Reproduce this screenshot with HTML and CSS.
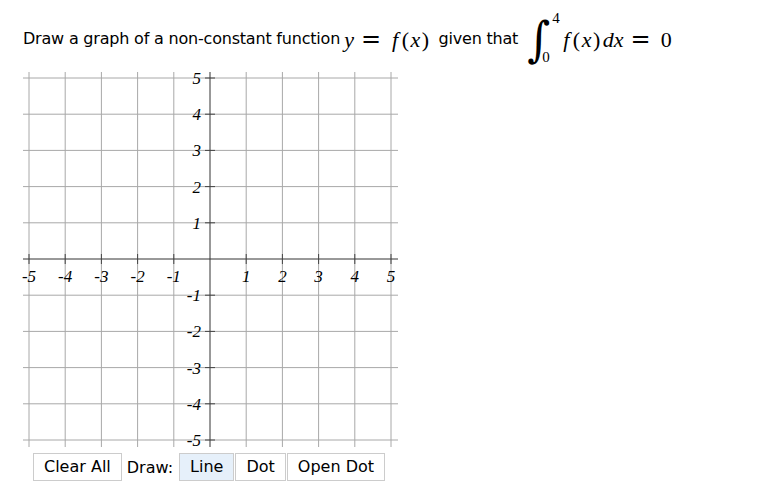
FILE: index.html
```html
<!DOCTYPE html>
<html>
<head>
<meta charset="utf-8">
<link rel="stylesheet" href="styles.css">
</head>
<body>
<div class="page">
  <div class="prompt">
    <span class="txt">Draw a graph of a non-constant function</span>
    <span class="math m-first"><i>y</i><span class="eq">=</span><i class="f">f</i><span class="par">(</span><i>x</i><span class="par">)</span></span>
    <span class="txt given">given that</span>
    <span class="integral">
      <span class="int-sign">∫</span>
      <span class="limits"><span class="up">4</span><span class="lo">0</span></span>
    </span>
    <span class="math"><i class="f">f</i><span class="par">(</span><i>x</i><span class="par">)</span><i class="d">d</i><i>x</i><span class="eq">=</span><span class="num">0</span></span>
  </div>

  <div class="board">
    <svg width="375" height="375" viewBox="0 0 375 375">
      <g class="grid">
        <line x1="6" y1="0" x2="6" y2="375"/>
        <line x1="42.2" y1="0" x2="42.2" y2="375"/>
        <line x1="78.4" y1="0" x2="78.4" y2="375"/>
        <line x1="114.6" y1="0" x2="114.6" y2="375"/>
        <line x1="150.8" y1="0" x2="150.8" y2="375"/>
        <line x1="223.2" y1="0" x2="223.2" y2="375"/>
        <line x1="259.4" y1="0" x2="259.4" y2="375"/>
        <line x1="295.6" y1="0" x2="295.6" y2="375"/>
        <line x1="331.8" y1="0" x2="331.8" y2="375"/>
        <line x1="368" y1="0" x2="368" y2="375"/>
        <line x1="0" y1="6" x2="375" y2="6"/>
        <line x1="0" y1="42.2" x2="375" y2="42.2"/>
        <line x1="0" y1="78.4" x2="375" y2="78.4"/>
        <line x1="0" y1="114.6" x2="375" y2="114.6"/>
        <line x1="0" y1="150.8" x2="375" y2="150.8"/>
        <line x1="0" y1="223.2" x2="375" y2="223.2"/>
        <line x1="0" y1="259.4" x2="375" y2="259.4"/>
        <line x1="0" y1="295.6" x2="375" y2="295.6"/>
        <line x1="0" y1="331.8" x2="375" y2="331.8"/>
        <line x1="0" y1="368" x2="375" y2="368"/>
      </g>
      <g class="axis">
        <line x1="0" y1="187" x2="375" y2="187"/>
        <line x1="187" y1="0" x2="187" y2="375"/>
      </g>
      <g class="ticks">
        <line x1="6" y1="182" x2="6" y2="192"/>
        <line x1="42.2" y1="182" x2="42.2" y2="192"/>
        <line x1="78.4" y1="182" x2="78.4" y2="192"/>
        <line x1="114.6" y1="182" x2="114.6" y2="192"/>
        <line x1="150.8" y1="182" x2="150.8" y2="192"/>
        <line x1="223.2" y1="182" x2="223.2" y2="192"/>
        <line x1="259.4" y1="182" x2="259.4" y2="192"/>
        <line x1="295.6" y1="182" x2="295.6" y2="192"/>
        <line x1="331.8" y1="182" x2="331.8" y2="192"/>
        <line x1="368" y1="182" x2="368" y2="192"/>
        <line x1="182" y1="6" x2="192" y2="6"/>
        <line x1="182" y1="42.2" x2="192" y2="42.2"/>
        <line x1="182" y1="78.4" x2="192" y2="78.4"/>
        <line x1="182" y1="114.6" x2="192" y2="114.6"/>
        <line x1="182" y1="150.8" x2="192" y2="150.8"/>
        <line x1="182" y1="223.2" x2="192" y2="223.2"/>
        <line x1="182" y1="259.4" x2="192" y2="259.4"/>
        <line x1="182" y1="295.6" x2="192" y2="295.6"/>
        <line x1="182" y1="331.8" x2="192" y2="331.8"/>
        <line x1="182" y1="368" x2="192" y2="368"/>
      </g>
      <g class="xlabels">
        <text x="6" y="210">-5</text>
        <text x="42.2" y="210">-4</text>
        <text x="78.4" y="210">-3</text>
        <text x="114.6" y="210">-2</text>
        <text x="150.8" y="210">-1</text>
        <text x="223.2" y="210">1</text>
        <text x="259.4" y="210">2</text>
        <text x="295.6" y="210">3</text>
        <text x="331.8" y="210">4</text>
        <text x="368" y="210">5</text>
      </g>
      <g class="ylabels">
        <text x="178" y="12">5</text>
        <text x="178" y="48.2">4</text>
        <text x="178" y="84.4">3</text>
        <text x="178" y="120.6">2</text>
        <text x="178" y="156.8">1</text>
        <text x="178" y="229.2">-1</text>
        <text x="178" y="265.4">-2</text>
        <text x="178" y="301.6">-3</text>
        <text x="178" y="337.8">-4</text>
        <text x="178" y="374">-5</text>
      </g>
    </svg>
  </div>

  <div class="controls">
    <button class="btn">Clear All</button>
    <span class="draw-label">Draw:</span>
    <div class="group">
      <button class="btn active">Line</button>
      <button class="btn">Dot</button>
      <button class="btn">Open Dot</button>
    </div>
  </div>
</div>
</body>
</html>
```

FILE: styles.css
```css
html, body {
  margin: 0;
  padding: 0;
  background: #ffffff;
}

.page {
  padding: 9px 0 0 23px;
  font-family: "DejaVu Sans", sans-serif;
  font-size: 16px;
  color: #000000;
}

.prompt {
  display: flex;
  align-items: center;
  height: 60px;
  white-space: nowrap;
}

.txt {
  line-height: 20px;
  letter-spacing: -0.2px;
}

.math {
  font-family: "Liberation Serif", "DejaVu Serif", serif;
  font-size: 22px;
  line-height: 26px;
  display: inline-flex;
  align-items: baseline;
}

.math i {
  font-style: italic;
}

.math .f {
  padding: 0 2px 0 1px;
}

.math .par {
  padding: 0 1.5px;
}

.math .d {
  padding-left: 1px;
}

.math .eq {
  font-family: "DejaVu Sans", sans-serif;
  font-size: 24px;
  margin: 0 10px 0 7px;
}

.m-first {
  margin-left: 4px;
  margin-right: 8px;
}

.given {
  margin-right: 9px;
}

.integral {
  display: flex;
  height: 56px;
  margin-right: 3px;
}

.int-sign {
  display: block;
  width: 22px;
  text-align: center;
  font-family: "DejaVu Serif", serif;
  font-size: 44px;
  line-height: 56px;
  transform: scaleY(1.1);
}

.limits {
  display: flex;
  flex-direction: column;
  justify-content: space-between;
  width: 10px;
  font-family: "Liberation Serif", serif;
  font-size: 15px;
  line-height: 15px;
  padding: 0 0 2px 0;
}

.limits .up {
  margin-left: 3px;
}

.limits .lo {
  margin-left: -7px;
}

.board {
  margin-top: 3px;
  width: 375px;
  height: 375px;
}

.board svg {
  display: block;
  overflow: visible;
}

.grid line {
  stroke: #a8a8a8;
  stroke-width: 1;
}

.axis line {
  stroke: #333333;
  stroke-width: 1;
}

.ticks line {
  stroke: #444444;
  stroke-width: 1;
}

.xlabels text,
.ylabels text {
  font-family: "Liberation Serif", serif;
  font-style: italic;
  font-size: 17px;
  fill: #000000;
}

.xlabels text {
  text-anchor: middle;
}

.ylabels text {
  text-anchor: end;
}

.controls {
  display: flex;
  align-items: center;
  margin-top: 6px;
  margin-left: 10px;
}

.btn {
  font-family: "DejaVu Sans", sans-serif;
  font-size: 16px;
  line-height: 18px;
  color: #000000;
  background: #ffffff;
  border: 1px solid #cccccc;
  border-radius: 0;
  padding: 4px 10px;
  margin: 0;
  height: 28px;
}

.btn.active {
  background: #e6f0fa;
}

.draw-label {
  margin: 0 6px 0 5px;
}

.group {
  display: flex;
  gap: 1px;
}
```
